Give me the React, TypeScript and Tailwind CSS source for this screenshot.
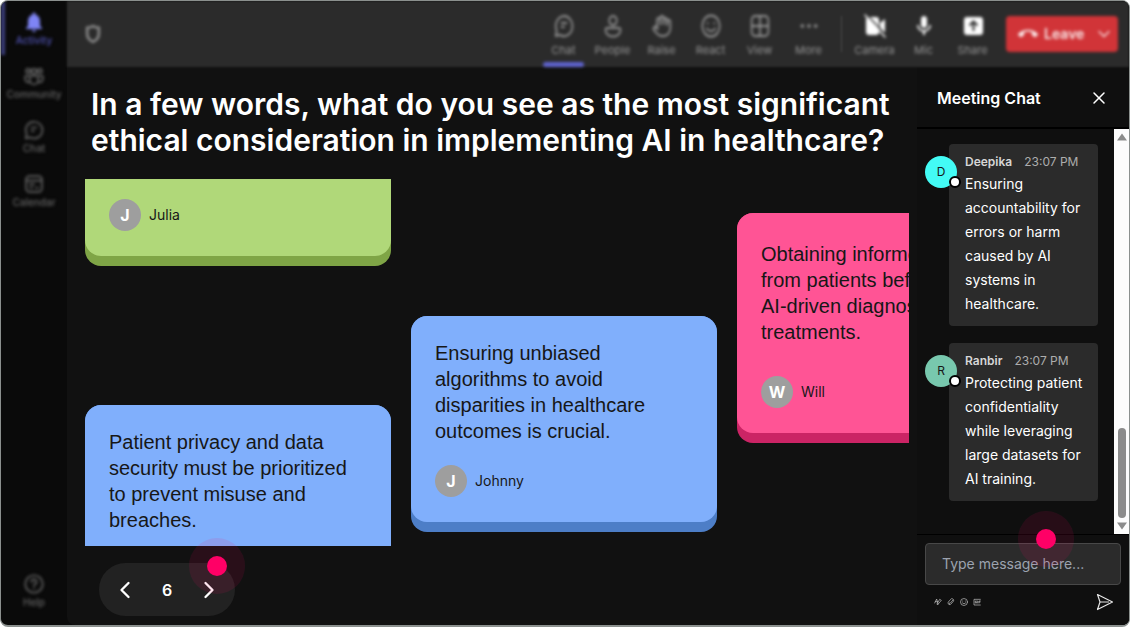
/**
 * App.tsx - Meeting stage with the open ended question board and chat
 */

import { useState } from 'react';
import type { ReactNode } from 'react';
import clsx from 'clsx';
import { ChevronDown, ChevronLeft, ChevronRight, Hand, X } from 'lucide-react';
import { MdCallEnd, MdMic, MdNotifications } from 'react-icons/md';

interface IconProps {
  className?: string;
}

interface Message {
  id: number;
  name: string;
  time: string;
  text: string;
  avatar: string;
}

function StrokeIcon({ className, children }: IconProps & { children: ReactNode }) {
  return (
    <svg
      viewBox="0 0 24 24"
      fill="none"
      stroke="currentColor"
      strokeWidth="2"
      strokeLinecap="round"
      strokeLinejoin="round"
      preserveAspectRatio="none"
      className={className}
    >
      {children}
    </svg>
  );
}

const ChatIcon = ({ className }: IconProps) => (
  <StrokeIcon className={className}>
    <path d="M2 22l1.300-5.200A10 10 0 1 1 7.200 20.800L2 22z" />
    <path d="M9 9h6M9 13h3" />
  </StrokeIcon>
);

const CommunityIcon = ({ className }: IconProps) => (
  <StrokeIcon className={className}>
    <circle cx="12" cy="6.500" r="3" />
    <circle cx="5" cy="6" r="2.500" />
    <circle cx="19" cy="6" r="2.500" />
    <path d="M7 12h10v5a5 5 0 0 1-10 0zM7 12H1.500v3.500A4 4 0 0 0 7 19.300M17 12h5.500v3.500a4 4 0 0 1-5.500 3.800" />
  </StrokeIcon>
);

const CalendarIcon = ({ className }: IconProps) => (
  <StrokeIcon className={className}>
    <rect x="2.500" y="2.500" width="19" height="19" rx="4" />
    <path d="M3 8h18M7 12.500h5M7 16.500h3M14 16.500h3" />
  </StrokeIcon>
);

const PersonIcon = ({ className }: IconProps) => (
  <StrokeIcon className={className}>
    <circle cx="12" cy="6.500" r="4.500" />
    <path d="M5 14h14a2 2 0 0 1 2 2c0 4-4 6.500-9 6.500S3 20 3 16a2 2 0 0 1 2-2z" />
  </StrokeIcon>
);

const SmileIcon = ({ className }: IconProps) => (
  <StrokeIcon className={className}>
    <circle cx="12" cy="12" r="10.500" />
    <path d="M8 9v.5M16 9v.5M7 14.500c2.500 3.500 7.500 3.500 10 0" />
  </StrokeIcon>
);

const GridIcon = ({ className }: IconProps) => (
  <StrokeIcon className={className}>
    <rect x="2" y="2" width="20" height="20" rx="4" />
    <path d="M12 2v20M2 12h20" />
  </StrokeIcon>
);

const MoreIcon = ({ className }: IconProps) => (
  <svg viewBox="0 0 24 24" fill="currentColor" className={className}>
    <circle cx="4" cy="12" r="2.200" />
    <circle cx="12" cy="12" r="2.200" />
    <circle cx="20" cy="12" r="2.200" />
  </svg>
);

const CameraOffIcon = ({ className }: IconProps) => (
  <svg viewBox="0 0 24 24" className={className}>
    <path d="M6 3h7a3 3 0 0 1 3 3v12a3 3 0 0 1-3 3H6a3 3 0 0 1-3-3V6a3 3 0 0 1 3-3zM17 9l5-4v14l-5-4z" fill="currentColor" />
    <path d="M4 1l19 20" stroke="#2b2b2b" strokeWidth="1.500" />
    <path d="M2 1l20 22" stroke="currentColor" strokeWidth="1.500" strokeLinecap="round" />
  </svg>
);

const ShareIcon = ({ className }: IconProps) => (
  <svg viewBox="0 0 24 24" className={className}>
    <rect x="3" y="3" width="19" height="18" rx="3" fill="currentColor" />
    <path d="M12.500 17V8M8.500 11.500l4-4 4 4" fill="none" stroke="#2b2b2b" strokeWidth="2" />
  </svg>
);

const HelpIcon = ({ className }: IconProps) => (
  <StrokeIcon className={className}>
    <circle cx="12" cy="12" r="10.500" />
    <path d="M9 9.500a3 3 0 1 1 4.500 2.500c-1 .6-1.500 1-1.500 2M12 17v.5" />
  </StrokeIcon>
);

const ShieldIcon = ({ className }: IconProps) => (
  <svg viewBox="0 0 24 24" fill="none" stroke="currentColor" strokeWidth="3" className={className}>
    <path d="M12 2.500c3 1.500 5 2 7 2V12c0 4.500-3 7.500-7 9.500-4-2-7-5-7-9.500V4.500c2 0 4-.5 7-2z" />
  </svg>
);

const SendIcon = ({ className }: IconProps) => (
  <svg viewBox="0 0 18 18" fill="none" stroke="currentColor" strokeWidth="1.200" strokeLinejoin="round" className={className}>
    <path d="M1.500 1.500L16.500 9l-15 7.500L4 9zM4 9h9" />
  </svg>
);

const navItems = [
  { label: 'Activity', icon: MdNotifications, active: true },
  { label: 'Community', icon: CommunityIcon },
  { label: 'Chat', icon: ChatIcon },
  { label: 'Calendar', icon: CalendarIcon },
];

const meetingTools = [
  { label: 'Chat', icon: ChatIcon, active: true },
  { label: 'People', icon: PersonIcon },
  { label: 'Raise', icon: Hand },
  { label: 'React', icon: SmileIcon },
  { label: 'View', icon: GridIcon },
  { label: 'More', icon: MoreIcon },
];

const deviceTools = [
  { label: 'Camera', icon: CameraOffIcon },
  { label: 'Mic', icon: MdMic },
  { label: 'Share', icon: ShareIcon },
];

const messages: Message[] = [
  {
    id: 1,
    name: 'Deepika',
    time: '23:07 PM',
    text: 'Ensuring accountability for errors or harm caused by AI systems in healthcare.',
    avatar: 'bg-[#43fbf5]',
  },
  {
    id: 2,
    name: 'Ranbir',
    time: '23:07 PM',
    text: 'Protecting patient confidentiality while leveraging large datasets for AI training.',
    avatar: 'bg-[#78c8ae]',
  },
];

function NavItem({ label, icon: Icon, active }: { label: string; icon: React.ElementType; active?: boolean }) {
  return (
    <button
      className={clsx(
        'flex h-[54px] w-full flex-col items-center border-l-4 pr-1 pt-2 text-[10px] font-medium leading-3 blur-[1px]',
        active ? 'border-[#3c3e7c] text-[#5053b4]' : 'border-transparent text-[#646464]',
      )}
    >
      <span className="flex h-[25px] items-center">
        <Icon className={clsx('shrink-0', active ? 'size-6 text-[#7f85f5]' : 'size-5')} />
      </span>
      {label}
    </button>
  );
}

function ToolButton({
  label,
  icon: Icon,
  active,
  bright,
}: {
  label: string;
  icon: React.ElementType;
  active?: boolean;
  bright?: boolean;
}) {
  return (
    <button className="flex h-full w-[49px] flex-col items-center pt-[13px] text-[11px] leading-4 text-[#969696] blur-[1px]">
      <Icon className={clsx('mb-1 h-6 shrink-0', bright ? 'w-6 text-white' : 'w-5')} preserveAspectRatio="none" />
      {label}
      {active && <span className="mt-1 h-[5px] w-[41px] shrink-0 rounded-sm bg-[#5f63cf]" />}
    </button>
  );
}

function Hotspot({ className }: IconProps) {
  return (
    <span
      className={clsx(
        'pointer-events-none absolute flex size-14 items-center justify-center rounded-full bg-[#ff0066]/10',
        className,
      )}
    >
      <span className="size-5 rounded-full bg-[#ff0066]" />
    </span>
  );
}

function Author({ name }: { name: string }) {
  return (
    <div className="flex items-center gap-2 font-[Inter,sans-serif]">
      <span className="flex size-8 items-center justify-center rounded-full bg-[#9e9e9e] text-base font-bold text-white">
        {name[0]}
      </span>
      <span className="text-sm text-[#171717]">{name}</span>
    </div>
  );
}

function AnswerCard({
  name,
  text,
  face,
  edge,
  className,
}: {
  name: string;
  text?: string;
  face: string;
  edge: string;
  className?: string;
}) {
  return (
    <article className={clsx('shrink-0 rounded-2xl pb-[10px]', edge, text ? '' : 'rounded-t-none')}>
      <div className={clsx('rounded-2xl px-6 pb-[25px]', face, className, text ? '' : 'rounded-t-none')}>
        {text && (
          <p className="font-['Liberation_Sans',Arial,sans-serif] text-xl leading-[26px] text-[#171717]">
            {text}
          </p>
        )}
        <Author name={name} />
      </div>
    </article>
  );
}

function ChatMessage({ message }: { message: Message }) {
  return (
    <li className="relative rounded bg-[#2b2b2b] pb-[10px] pl-4 pr-2 pt-2">
      <span
        className={clsx(
          'absolute -left-6 top-3 flex size-8 items-center justify-center rounded-full text-xs text-[#171717]',
          message.avatar,
        )}
      >
        {message.name[0]}
        <span className="absolute -right-1 bottom-0 size-3 rounded-full border-2 border-black bg-white" />
      </span>
      <div className="flex gap-3 text-xs leading-5">
        <span className="font-semibold text-[#d6d6d6]">{message.name}</span>
        <time className="text-[#adadad]">{message.time}</time>
      </div>
      <p className="text-sm leading-6 text-white">{message.text}</p>
    </li>
  );
}

function ChatPanel() {
  const [draft, setDraft] = useState('');

  return (
    <aside className="flex w-[212px] shrink-0 flex-col bg-[#0f0f0f]">
      <header className="flex h-[62px] shrink-0 items-center justify-between border-b-2 border-black pl-5 pr-5 pt-0.5">
        <h2 className="text-base font-semibold text-white">Meeting Chat</h2>
        <button aria-label="Close chat" className="text-white">
          <X className="size-5" strokeWidth={1.8} />
        </button>
      </header>

      <div className="flex min-h-0 flex-1">
        <ul className="flex min-w-0 flex-1 flex-col gap-[17px] overflow-hidden pl-8 pr-4 pt-[15px]">
          {messages.map((message) => (
            <ChatMessage key={message.id} message={message} />
          ))}
        </ul>
        <div className="flex w-[15px] flex-col items-center justify-between bg-[#fcfcfc] py-1">
          <svg viewBox="0 0 10 8" className="h-2 w-[10px]">
            <path d="M5 0.500L10 7.500H0z" fill="#8b8b8b" />
          </svg>
          <div className="mb-1 mt-auto h-[90px] w-2 rounded-full bg-[#8b8b8b]" />
          <svg viewBox="0 0 10 8" className="h-2 w-[10px]">
            <path d="M5 7.500L10 0.500H0z" fill="#8b8b8b" />
          </svg>
        </div>
      </div>

      <footer className="relative shrink-0 border-t border-black px-2 pb-1.5 pt-2">
        <input
          aria-label="Type message"
          value={draft}
          onChange={(e) => setDraft(e.target.value)}
          placeholder="Type message here..."
          className="h-[42px] w-full rounded border border-[#484848] bg-[#2b2b2b] px-4 pb-0.5 text-sm text-white placeholder:text-[#9ca3af]"
        />
        <div className="flex h-[34px] items-center gap-[5px] pl-[9px] pr-[7px] text-[#c4c4c4]">
          <button aria-label="Format">
            <StrokeIcon className="size-2">
              <path d="M2 15L8 3l4 15M4 11h7M11 20L22 7l-5-3-7 12z" />
            </StrokeIcon>
          </button>
          <button aria-label="Attach">
            <StrokeIcon className="size-2">
              <path d="M10 15l7-8M8 20a5 5 0 0 1-4-8l7-8a5 5 0 0 1 8 6l-8 9a3 3 0 0 1-4-4" />
            </StrokeIcon>
          </button>
          <button aria-label="Emoji">
            <SmileIcon className="size-2" />
          </button>
          <button aria-label="GIF">
            <StrokeIcon className="size-2">
              <path d="M22 4H3v17h19M10 9H7v6h4v-3M14 9v6M22 9h-4v6M18 12h3" />
            </StrokeIcon>
          </button>
          <button aria-label="Send" className="ml-auto text-[#e5e5e5]">
            <SendIcon className="size-[18px]" />
          </button>
        </div>
        <Hotspot className="-top-6 left-[101px]" />
      </footer>
    </aside>
  );
}

export default function App() {
  const [page, setPage] = useState(6);

  return (
    <div className="bg-white font-[Inter,sans-serif]">
      <div className="flex h-screen overflow-hidden rounded-lg border border-b-2 border-[#8b908e] bg-[#0a0a0a]">
        <nav className="flex w-[66px] shrink-0 flex-col pb-2 blur-[1px]">
          {navItems.map((item) => (
            <NavItem key={item.label} {...item} />
          ))}
          <div className="mt-auto">
            <NavItem label="Help" icon={HelpIcon} />
          </div>
        </nav>

        <div className="flex min-w-0 flex-1 flex-col rounded-bl-lg bg-[#111111]">
          <header className="flex h-[66px] shrink-0 items-center bg-[#2b2b2b] pl-4 pr-[11px] blur-[1px]">
            <ShieldIcon className="size-5 text-[#8f8f8f] blur-[1px]" />
            <div className="ml-auto flex h-full items-center">
              {meetingTools.map((tool) => (
                <ToolButton key={tool.label} {...tool} />
              ))}
              <span className="mx-2 h-9 w-px bg-[#484848]" />
              {deviceTools.map((tool) => (
                <ToolButton key={tool.label} {...tool} bright />
              ))}
            </div>
            <button className="ml-[9px] flex h-9 w-28 items-center rounded bg-[#d13438] pl-3 pr-1 text-sm font-semibold text-white/90 blur-[1px]">
              <MdCallEnd className="mr-1.5 size-5" />
              Leave
              <ChevronDown className="ml-auto size-5" strokeWidth={1.5} />
            </button>
          </header>

          <div className="flex min-h-0 flex-1">
            <main className="flex min-w-0 flex-1 flex-col pb-[9px] pl-[18px] pr-2 pt-[19px]">
              <h1 className="max-w-[820px] pl-1.5 text-[30px] font-semibold leading-9 text-white">
                In a few words, what do you see as the most significant ethical consideration in implementing AI in
                healthcare?
              </h1>

              <section className="mt-[21px] flex min-h-0 flex-1 gap-5 overflow-hidden">
                <div className="flex w-[306px] shrink-0 flex-col gap-[139px]">
                  <AnswerCard name="Julia" face="bg-[#b0d879]" edge="bg-[#7fa546]" className="pt-5" />
                  <AnswerCard
                    name="Priya"
                    text="Patient privacy and data security must be prioritized to prevent misuse and breaches."
                    face="bg-[#80affc]"
                    edge="bg-[#4d7ec7]"
                    className="space-y-[21px] pt-6"
                  />
                </div>
                <div className="w-[306px] shrink-0 pt-[137px]">
                  <AnswerCard
                    name="Johnny"
                    text="Ensuring unbiased algorithms to avoid disparities in healthcare outcomes is crucial."
                    face="bg-[#80affc]"
                    edge="bg-[#4d7ec7]"
                    className="space-y-[21px] pt-6"
                  />
                </div>
                <div className="w-[306px] shrink-0 pt-[34px]">
                  <AnswerCard
                    name="Will"
                    text="Obtaining informed consent from patients before using AI-driven diagnostics or treatments."
                    face="bg-[#ff5495]"
                    edge="bg-[#cb2465]"
                    className="space-y-[31px] pt-7"
                  />
                </div>
              </section>

              <div className="relative ml-[14px] mt-[17px] flex h-[53px] w-[136px] shrink-0 items-center justify-between rounded-full bg-[#222222] px-3 text-white">
                <button aria-label="Previous" onClick={() => setPage(page - 1)}>
                  <ChevronLeft className="size-7" strokeWidth={2} />
                </button>
                <span className="text-base font-semibold">{page}</span>
                <button aria-label="Next" onClick={() => setPage(page + 1)}>
                  <ChevronRight className="size-7" strokeWidth={2} />
                </button>
                <Hotspot className="-top-[25px] right-[-10px]" />
              </div>
            </main>

            <ChatPanel />
          </div>
        </div>
      </div>
    </div>
  );
}
